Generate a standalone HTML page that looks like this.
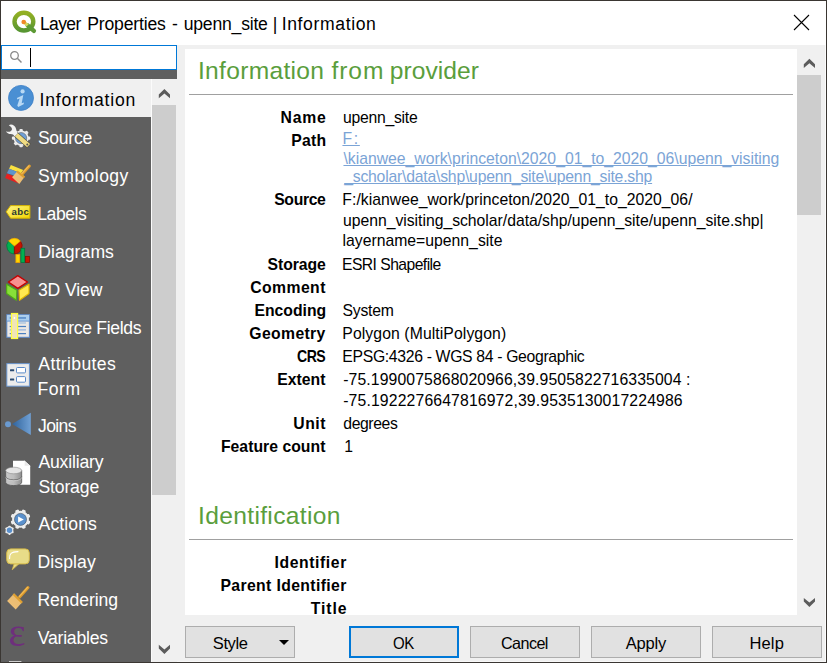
<!DOCTYPE html>
<html><head><meta charset="utf-8">
<style>
html,body{margin:0;padding:0;}
body{width:827px;height:663px;position:relative;overflow:hidden;background:#f0f0f0;font-family:"Liberation Sans",sans-serif;color:#000;}
.abs{position:absolute;}
.t{position:absolute;white-space:pre;}
#frame{position:absolute;left:0;top:0;width:827px;height:663px;box-sizing:border-box;border:1px solid #3a3632;z-index:50;}
#titlebar{left:1px;top:1px;width:825px;height:44px;background:#fff;}
#search{left:1px;top:45px;width:176px;height:25px;box-sizing:border-box;border:1px solid #0078d7;background:#fff;}
#sidebar{left:1px;top:70px;width:176px;height:592px;background:#5f5f5f;}
#sbscroll{left:151px;top:79px;width:26px;height:583px;background:#f0f0f0;}
#sbthumb{left:152px;top:105px;width:24px;height:390px;background:#cdcdcd;}
#selitem{left:1px;top:79px;width:150px;height:38px;background:#f0f0f0;}
#panel{left:185px;top:49px;width:612px;height:566px;background:#fff;}
#vthumb{left:797px;top:75px;width:24px;height:140px;background:#cdcdcd;}
.hr{position:absolute;left:189px;width:604px;height:1px;background:#a0a0a0;}
.btn{position:absolute;top:626px;width:110px;height:32px;box-sizing:border-box;border:1px solid #adadad;background:#e1e1e1;}
</style></head><body>
<div id="titlebar" class="abs"></div>
<!--QGISLOGO-->
<svg class="abs" style="left:793px;top:14px" width="17" height="17" viewBox="0 0 17 17"><path d="M1 1 L16 16 M16 1 L1 16" stroke="#000" stroke-width="1.1" fill="none"/></svg>

<div id="sidebar" class="abs"></div>
<div id="search" class="abs"></div>
<svg class="abs" style="left:9px;top:50px" width="14" height="14" viewBox="0 0 14 14"><circle cx="5.5" cy="5.5" r="3.8" fill="none" stroke="#8a8a8a" stroke-width="1.3"/><path d="M8.3 8.3 L12.5 12.5" stroke="#8a8a8a" stroke-width="1.5"/></svg>
<div class="abs" style="left:30px;top:48px;width:1px;height:19px;background:#000"></div>

<div id="sbscroll" class="abs"></div>
<div id="sbthumb" class="abs"></div>
<div id="selitem" class="abs"></div>
<div class="abs" style="left:151px;top:79px;width:1px;height:583px;background:#fbfbfb"></div>
<div class="abs" style="left:825px;top:45px;width:1px;height:617px;background:#fbfbfb"></div>
<div class="abs" style="left:177px;top:661px;width:649px;height:1px;background:#f8f8f8;z-index:6"></div>
<!-- sidebar scroll arrows -->
<svg class="abs" style="left:0;top:0" width="184" height="663" viewBox="0 0 184 663">
<defs>
<linearGradient id="qg" x1="0" y1="0" x2="0" y2="1"><stop offset="0" stop-color="#93b023"/><stop offset="1" stop-color="#589632"/></linearGradient>
<linearGradient id="jn" x1="0" y1="0" x2="1" y2="0"><stop offset="0" stop-color="#2f639c"/><stop offset="1" stop-color="#70a0d4"/></linearGradient>
<linearGradient id="lb" x1="0" y1="0" x2="1" y2="1"><stop offset="0" stop-color="#fff68a"/><stop offset="1" stop-color="#f2d400"/></linearGradient>
<linearGradient id="db" x1="0" y1="0" x2="1" y2="0"><stop offset="0" stop-color="#c8c8c8"/><stop offset="0.5" stop-color="#bdbdbd"/><stop offset="1" stop-color="#8e8e8e"/></linearGradient>
<pattern id="br" width="1.4" height="1.4" patternUnits="userSpaceOnUse" patternTransform="rotate(45)"><rect width="1.4" height="1.4" fill="#f6d49a"/><rect width="0.7" height="0.7" fill="#e2a850"/><rect x="0.7" y="0.7" width="0.7" height="0.7" fill="#e2a850"/></pattern>
</defs>
<!-- QGIS logo -->
<g>
<ellipse cx="23.9" cy="21.6" rx="9.4" ry="8.9" fill="none" stroke="url(#qg)" stroke-width="4.4"/>
<path d="M27.6 25.4 L33.9 30.8" stroke="#5d9a35" stroke-width="4.4" stroke-linecap="round"/>
<path d="M24.1 22.3 L27.6 25.4" stroke="#d8d860" stroke-width="3.2"/>
<circle cx="23.7" cy="22" r="2.3" fill="#f08a28"/>
</g>
<!-- Information -->
<circle cx="21" cy="97.9" r="12.5" fill="#4a8fd3" stroke="#3f80c6" stroke-width="0.8"/>
<circle cx="22.6" cy="91.4" r="2.1" fill="#b9d9f4"/>
<path d="M16.9 98.1 L23.3 95 L21.7 103.2 L24 102.4 L23.6 104.3 L18.2 107 L17.3 105.6 L19.6 98.4 L17.3 99.6 Z" fill="#b9d9f4"/>
<!-- Source: gear + wrench -->
<g>
<circle cx="21.1" cy="138.1" r="7.6" fill="#ececec"/>
<g fill="#ececec">
<rect x="19.4" y="128.9" width="3.4" height="18.4" rx="1"/>
<rect x="19.4" y="128.9" width="3.4" height="18.4" rx="1" transform="rotate(45 21.1 138.1)"/>
<rect x="19.4" y="128.9" width="3.4" height="18.4" rx="1" transform="rotate(90 21.1 138.1)"/>
<rect x="19.4" y="128.9" width="3.4" height="18.4" rx="1" transform="rotate(135 21.1 138.1)"/>
</g>
<circle cx="21.1" cy="138.1" r="5.6" fill="#6f9fd6" stroke="#4a4a4a" stroke-width="0.5"/>
<path d="M15.8 134.4 L28.8 145.8" stroke="#4a4632" stroke-width="5.4" stroke-linecap="butt"/>
<path d="M16.4 134.9 L28.6 145.6" stroke="#f0dc82" stroke-width="4.5" stroke-linecap="butt"/>
<circle cx="27.3" cy="144.6" r="1" fill="#555"/>
<path d="M8.8 125.2 C11.5 123.6 15.2 125.4 16.1 129 C16.5 130.8 16.7 132 17.7 133.6 L14.6 136.5 C13.6 134.9 12.6 134.1 10.8 134.1 C8.6 134.1 6.7 132.9 6.1 131.2 C8.6 132.3 11.3 131.6 11.9 129.7 C12.4 127.9 10.7 126.3 8.8 125.2 Z" fill="#f2f2f2"/>
</g>
<!-- Symbology -->
<g>
<path d="M10.9 165 L23.2 170.1 L21.1 173.3 L9.1 168.8 Z" fill="#f8e040"/>
<path d="M9.1 168.8 L19 172.4 L16 176 L6.9 173.3 Z" fill="#5f94cc"/>
<path d="M6.9 173.5 L13 176.1 L18.7 183.4 L5.1 178 Z" fill="#e82020"/>
<path d="M17.5 171 L24.7 176.7 L19.3 184 L12.1 177.3 Z" fill="url(#br)"/>
<path d="M17.5 170.6 L25 176.6 L23.8 178.3 L16.3 172.2 Z" fill="#e0a030"/>
<path d="M22 174.2 L29.4 166.1" stroke="#dc9a2c" stroke-width="3" stroke-linecap="round"/><path d="M21.8 173.6 L29 165.8" stroke="#f2bc58" stroke-width="1.1" stroke-linecap="round"/>
</g>
<!-- Labels -->
<g>
<path d="M6.2 211.8 L10.6 205.6 L29.9 205.6 L29.9 218.2 L10.6 218.2 Z" fill="url(#lb)" stroke="#d6b200" stroke-width="1"/>
<text x="11.4" y="214.8" font-family="Liberation Sans, sans-serif" font-weight="bold" font-size="9.6" fill="#2c3a34" letter-spacing="0.4">abc</text>
</g>
<!-- Diagrams -->
<g>
<path d="M14.4 246 L8.6 240.9 A7.9 7.9 0 0 0 14.4 253.9 Z" fill="#00b050" stroke="#007840" stroke-width="0.8"/>
<path d="M14.4 246 L20.4 241.1 A7.9 7.9 0 0 1 14.4 253.9 Z" fill="#c81400" stroke="#8a1000" stroke-width="0.8"/>
<path d="M14.4 246 L8.6 240.9 A7.9 7.9 0 0 1 20.4 241.1 Z" fill="#ffd700" stroke="#f0a800" stroke-width="0.8"/>
<rect x="15.9" y="254.6" width="4" height="8" fill="#ffd700" stroke="#f0a000" stroke-width="0.8"/>
<rect x="20.9" y="248.3" width="3.8" height="14.2" fill="#00b050" stroke="#007840" stroke-width="0.8"/>
<rect x="25.4" y="256.4" width="4" height="6.1" fill="#c81400" stroke="#8a1000" stroke-width="0.8"/>
</g>
<!-- 3D View -->
<g stroke-linejoin="round">
<path d="M17.8 275.6 L27.5 282 L17.8 288.4 L8.4 282 Z" fill="#f89090" stroke="#c40000" stroke-width="1.3"/>
<path d="M6.6 284.2 L16.9 290.2 L16.4 300.2 L6.6 293.5 Z" fill="#88e038" stroke="#52aa18" stroke-width="1.2"/>
<path d="M19 290.2 L29 284.2 L29 293.5 L19.5 300.2 Z" fill="#ffe850" stroke="#e2b800" stroke-width="1.2"/>
</g>
<!-- Source Fields -->
<g>
<rect x="6.8" y="314.7" width="22.6" height="22.6" fill="#ece8e4" stroke="#5a88c8" stroke-width="1"/>
<rect x="7.3" y="315.2" width="21.6" height="5.8" fill="#a8cdee"/>
<rect x="6.8" y="320.6" width="22.6" height="1" fill="#6a98d4"/>
<rect x="9.7" y="317.3" width="16.3" height="1.3" fill="#4a7fc0"/>
<rect x="9.7" y="322.4" width="16.3" height="1.2" fill="#a0bee0"/>
<rect x="9.7" y="325.9" width="16.3" height="1.2" fill="#4a7fc0"/>
<rect x="9.7" y="329.3" width="16.3" height="1.2" fill="#90b0dc"/>
<rect x="9.7" y="333" width="16.3" height="1.2" fill="#4a7fc0"/>
<rect x="11.5" y="313.5" width="6.1" height="25" fill="#f0e4b8" stroke="#ffff3c" stroke-width="1.2"/>
<circle cx="14.4" cy="318" r="0.9" fill="#fff"/>
</g>
<!-- Attributes Form -->
<g>
<rect x="6.8" y="363.6" width="22.6" height="22.6" fill="#ececec" stroke="#6a94cc" stroke-width="1"/>
<rect x="10" y="369.2" width="4.2" height="2.1" rx="0.5" fill="#2a4a70"/>
<rect x="10" y="378.5" width="4.2" height="2.1" rx="0.5" fill="#2a4a70"/>
<rect x="16.5" y="367.5" width="9" height="5.4" rx="1" fill="#fff" stroke="#5a8ac8" stroke-width="1"/>
<rect x="16.5" y="376.6" width="9" height="5.6" rx="1" fill="#fff" stroke="#5a8ac8" stroke-width="1"/>
</g>
<!-- Joins -->
<circle cx="8" cy="424.2" r="3" fill="#6a9ad0"/>
<path d="M12.1 424 L30.8 412.8 L30.8 434.9 Z" fill="url(#jn)"/>
<!-- Auxiliary storage -->
<g>
<path d="M13 460.8 L24.4 460.8 L30.2 466 L30.2 484.7 L13 484.7 Z" fill="#fff"/>
<path d="M24.4 460.8 L24.4 466 L30.2 466 Z" fill="#e8e8e8" stroke="#fff" stroke-width="0.6"/>
<path d="M5.7 470.5 L5.7 482.3 A8 3.3 0 0 0 21.7 482.3 L21.7 470.5 Z" fill="url(#db)" stroke="#4e4e4e" stroke-width="0.7"/>
<path d="M5.7 476.6 A8 3.3 0 0 0 21.7 476.6" fill="none" stroke="#5a5a5a" stroke-width="0.8"/>
<path d="M5.7 477.4 A8 3.3 0 0 0 21.7 477.4" fill="none" stroke="#dcdcdc" stroke-width="0.6"/>
<ellipse cx="13.7" cy="470.5" rx="8" ry="3.3" fill="#e4e4e4" stroke="#8a8a8a" stroke-width="0.6"/>
</g>
<!-- Actions -->
<g>
<g fill="#ececec" transform="rotate(22.5 20.5 519.2)">
<circle cx="20.5" cy="519.2" r="8.5"/>
<rect x="18.6" y="509.2" width="3.8" height="20" rx="1.2"/>
<rect x="18.6" y="509.2" width="3.8" height="20" rx="1.2" transform="rotate(45 20.5 519.2)"/>
<rect x="18.6" y="509.2" width="3.8" height="20" rx="1.2" transform="rotate(90 20.5 519.2)"/>
<rect x="18.6" y="509.2" width="3.8" height="20" rx="1.2" transform="rotate(135 20.5 519.2)"/>
</g>
<circle cx="20.5" cy="519.4" r="6" fill="#5a90cc" stroke="#3a4a5a" stroke-width="0.6"/>
<path d="M18.1 516.6 L23.8 519.4 L18.1 522.4 Z" fill="#fff"/>
<g fill="#ececec">
<circle cx="9.5" cy="530.3" r="3.8"/>
<rect x="8.5" y="525.7" width="2" height="9.2" rx="0.6"/>
<rect x="8.5" y="525.7" width="2" height="9.2" rx="0.6" transform="rotate(60 9.5 530.3)"/>
<rect x="8.5" y="525.7" width="2" height="9.2" rx="0.6" transform="rotate(120 9.5 530.3)"/>
</g>
<circle cx="9.5" cy="530.3" r="2.7" fill="#5a90cc"/>
</g>
<!-- Display -->
<g>
<path d="M14.2 563.6 L12.2 569.8 L19.3 563.6 Z" fill="#e8dc88" stroke="#d4b848" stroke-width="0.8"/>
<rect x="6.7" y="548.9" width="22.6" height="15" rx="4" fill="#e8dc88" stroke="#d4b848" stroke-width="1"/>
<path d="M9.6 558.5 C9.4 553.5 11 552 18 551.6" fill="none" stroke="#fff" stroke-width="1.1" stroke-linecap="round"/>
</g>
<!-- Rendering -->
<g>
<path d="M14.2 593.6 L22.4 602 L15.7 609.6 L7.1 601 Z" fill="url(#br)"/>
<path d="M14 593.2 L22.9 602 L21.3 603.6 L12.6 594.8 Z" fill="#e0a030"/>
<path d="M19.6 597 L28 587.6" stroke="#dc9a2c" stroke-width="3" stroke-linecap="round"/><path d="M19.4 596.4 L27.6 587.3" stroke="#f2bc58" stroke-width="1.1" stroke-linecap="round"/>
</g>
<!-- Variables -->
<text x="8.4" y="645.5" font-family="Liberation Serif, serif" font-size="40.5" fill="#6e2f7c">ε</text>
<rect x="9" y="661" width="12.4" height="1" fill="#cfcfcf"/>
</svg>


<div id="panel" class="abs"></div>
<div id="vthumb" class="abs"></div>

<svg class="abs" style="left:0;top:0;z-index:5" width="827" height="663" viewBox="0 0 827 663"><polygon points="164.4,89.0 170.0,94.6 170.0,98.2 164.4,93.5 158.8,98.2 158.8,94.6" fill="#5c5c5c"/><polygon points="164.4,654.0 170.0,648.4 170.0,644.8 164.4,649.5 158.8,644.8 158.8,648.4" fill="#5c5c5c"/><polygon points="809.4,58.7 815.0,64.3 815.0,67.9 809.4,63.2 803.8,67.9 803.8,64.3" fill="#5c5c5c"/><polygon points="809.4,607.1 815.0,601.5 815.0,597.9 809.4,602.6 803.8,597.9 803.8,601.5" fill="#5c5c5c"/></svg>
<div class="hr" style="top:94px"></div>
<div class="hr" style="top:539px"></div>

<div class="btn" style="left:185px"></div>
<svg class="abs" style="left:278px;top:639px" width="12" height="8" viewBox="0 0 12 8"><path d="M1 1 L11 1 L6 6 Z" fill="#000"/></svg>
<div class="btn" style="left:349px;border:2px solid #0078d7"></div>
<div class="btn" style="left:470px"></div>
<div class="btn" style="left:591px"></div>
<div class="btn" style="left:712px"></div>
<div class="t" style="left:40.33px;top:13.67px;font-size:17.6px;line-height:20.22px;letter-spacing:-0.616px;transform:scaleX(0.9940);transform-origin:0 0;">Layer</div>
<div class="t" style="left:87.18px;top:13.67px;font-size:17.6px;line-height:20.22px;letter-spacing:-0.162px;">Properties</div>
<div class="t" style="left:172.07px;top:13.67px;font-size:17.6px;line-height:20.22px;">-</div>
<div class="t" style="left:183.74px;top:13.67px;font-size:17.6px;line-height:20.22px;letter-spacing:-0.216px;">upenn_site</div>
<div class="t" style="left:272.63px;top:13.67px;font-size:17.6px;line-height:20.22px;">|</div>
<div class="t" style="left:281.65px;top:13.67px;font-size:17.6px;line-height:20.22px;letter-spacing:0.623px;">Information</div>
<div class="t" style="left:39.61px;top:90.07px;font-size:17.6px;line-height:20.22px;letter-spacing:0.766px;">Information</div>
<div class="t" style="left:37.94px;top:128.07px;font-size:17.6px;line-height:20.22px;letter-spacing:-0.302px;color:#fff;">Source</div>
<div class="t" style="left:37.94px;top:166.07px;font-size:17.6px;line-height:20.22px;letter-spacing:0.422px;color:#fff;">Symbology</div>
<div class="t" style="left:37.29px;top:204.07px;font-size:17.6px;line-height:20.22px;letter-spacing:-0.455px;color:#fff;">Labels</div>
<div class="t" style="left:38.18px;top:242.07px;font-size:17.6px;line-height:20.22px;letter-spacing:0.065px;color:#fff;">Diagrams</div>
<div class="t" style="left:37.89px;top:280.07px;font-size:17.6px;line-height:20.22px;letter-spacing:-0.097px;color:#fff;">3D View</div>
<div class="t" style="left:37.94px;top:318.07px;font-size:17.6px;line-height:20.22px;letter-spacing:-0.329px;color:#fff;">Source Fields</div>
<div class="t" style="left:38.34px;top:354.07px;font-size:17.6px;line-height:20.22px;letter-spacing:0.338px;color:#fff;">Attributes</div>
<div class="t" style="left:37.50px;top:379.07px;font-size:17.6px;line-height:20.22px;letter-spacing:0.541px;color:#fff;">Form</div>
<div class="t" style="left:38.21px;top:416.07px;font-size:17.6px;line-height:20.22px;letter-spacing:-0.616px;transform:scaleX(0.9986);transform-origin:0 0;color:#fff;">Joins</div>
<div class="t" style="left:38.44px;top:452.07px;font-size:17.6px;line-height:20.22px;letter-spacing:-0.172px;color:#fff;">Auxiliary</div>
<div class="t" style="left:38.44px;top:477.07px;font-size:17.6px;line-height:20.22px;letter-spacing:-0.147px;color:#fff;">Storage</div>
<div class="t" style="left:38.62px;top:514.07px;font-size:17.6px;line-height:20.22px;letter-spacing:0.092px;color:#fff;">Actions</div>
<div class="t" style="left:37.50px;top:552.07px;font-size:17.6px;line-height:20.22px;letter-spacing:0.087px;color:#fff;">Display</div>
<div class="t" style="left:37.50px;top:590.07px;font-size:17.6px;line-height:20.22px;letter-spacing:-0.083px;color:#fff;">Rendering</div>
<div class="t" style="left:37.68px;top:628.07px;font-size:17.6px;line-height:20.22px;letter-spacing:-0.204px;color:#fff;">Variables</div>
<div class="t" style="left:197.91px;top:56.74px;font-size:24.6px;line-height:28.27px;letter-spacing:0.305px;color:#5a9e3c;">Information</div>
<div class="t" style="left:331.61px;top:56.74px;font-size:24.6px;line-height:28.27px;letter-spacing:0.871px;color:#5a9e3c;">from</div>
<div class="t" style="left:389.86px;top:56.74px;font-size:24.6px;line-height:28.27px;letter-spacing:0.036px;color:#5a9e3c;">provider</div>
<div class="t" style="left:197.98px;top:501.74px;font-size:24.6px;line-height:28.27px;letter-spacing:0.344px;color:#5a9e3c;">Identification</div>
<div class="t" style="left:280.45px;top:108.75px;font-size:15.75px;line-height:18.10px;letter-spacing:0.830px;font-weight:bold;">Name</div>
<div class="t" style="left:291.25px;top:131.75px;font-size:15.75px;line-height:18.10px;letter-spacing:0.261px;font-weight:bold;">Path</div>
<div class="t" style="left:274.23px;top:190.75px;font-size:15.75px;line-height:18.10px;letter-spacing:-0.359px;font-weight:bold;">Source</div>
<div class="t" style="left:267.53px;top:255.75px;font-size:15.75px;line-height:18.10px;letter-spacing:-0.055px;font-weight:bold;">Storage</div>
<div class="t" style="left:250.30px;top:278.75px;font-size:15.75px;line-height:18.10px;letter-spacing:0.413px;font-weight:bold;">Comment</div>
<div class="t" style="left:254.46px;top:301.75px;font-size:15.75px;line-height:18.10px;letter-spacing:-0.001px;font-weight:bold;">Encoding</div>
<div class="t" style="left:249.30px;top:324.75px;font-size:15.75px;line-height:18.10px;letter-spacing:0.362px;font-weight:bold;">Geometry</div>
<div class="t" style="left:297.07px;top:347.75px;font-size:15.75px;line-height:18.10px;letter-spacing:-0.551px;transform:scaleX(0.8943);transform-origin:0 0;font-weight:bold;">CRS</div>
<div class="t" style="left:277.25px;top:370.75px;font-size:15.75px;line-height:18.10px;letter-spacing:0.005px;font-weight:bold;">Extent</div>
<div class="t" style="left:293.34px;top:414.75px;font-size:15.75px;line-height:18.10px;letter-spacing:0.486px;font-weight:bold;">Unit</div>
<div class="t" style="left:220.95px;top:437.75px;font-size:15.75px;line-height:18.10px;letter-spacing:0.027px;font-weight:bold;">Feature count</div>
<div class="t" style="left:274.46px;top:553.75px;font-size:15.75px;line-height:18.10px;letter-spacing:0.593px;font-weight:bold;">Identifier</div>
<div class="t" style="left:220.46px;top:576.75px;font-size:15.75px;line-height:18.10px;letter-spacing:0.371px;font-weight:bold;">Parent Identifier</div>
<div class="t" style="left:310.71px;top:599.75px;font-size:15.75px;line-height:18.10px;letter-spacing:0.930px;font-weight:bold;">Title</div>
<div class="t" style="left:342.96px;top:108.75px;font-size:15.75px;line-height:18.10px;letter-spacing:-0.256px;">upenn_site</div>
<div class="t" style="left:342.35px;top:190.75px;font-size:15.75px;line-height:18.10px;letter-spacing:0.018px;">F:/kianwee_work/princeton/2020_01_to_2020_06/</div>
<div class="t" style="left:342.96px;top:211.75px;font-size:15.75px;line-height:18.10px;letter-spacing:-0.018px;">upenn_visiting_scholar/data/shp/upenn_site/upenn_site.shp|</div>
<div class="t" style="left:342.51px;top:232.25px;font-size:15.75px;line-height:18.10px;letter-spacing:0.006px;">layername=upenn_site</div>
<div class="t" style="left:342.29px;top:255.75px;font-size:15.75px;line-height:18.10px;letter-spacing:-0.551px;transform:scaleX(0.9961);transform-origin:0 0;">ESRI Shapefile</div>
<div class="t" style="left:342.56px;top:301.75px;font-size:15.75px;line-height:18.10px;letter-spacing:-0.254px;">System</div>
<div class="t" style="left:342.35px;top:324.75px;font-size:15.75px;line-height:18.10px;letter-spacing:0.088px;">Polygon (MultiPolygon)</div>
<div class="t" style="left:342.35px;top:347.75px;font-size:15.75px;line-height:18.10px;letter-spacing:-0.326px;">EPSG:4326 - WGS 84 - Geographic</div>
<div class="t" style="left:343.24px;top:370.75px;font-size:15.75px;line-height:18.10px;letter-spacing:0.115px;">-75.1990075868020966,39.9505822716335004 :</div>
<div class="t" style="left:343.24px;top:391.75px;font-size:15.75px;line-height:18.10px;letter-spacing:0.145px;">-75.1922276647816972,39.9535130017224986</div>
<div class="t" style="left:343.27px;top:414.75px;font-size:15.75px;line-height:18.10px;letter-spacing:-0.392px;">degrees</div>
<div class="t" style="left:344.17px;top:437.75px;font-size:15.75px;line-height:18.10px;">1</div>
<div class="t" style="left:342.45px;top:129.85px;font-size:15.75px;line-height:18.10px;letter-spacing:1.692px;color:#7ba4d6;text-decoration:underline;">F:</div>
<div class="t" style="left:343.46px;top:149.55px;font-size:15.75px;line-height:18.10px;letter-spacing:-0.003px;color:#7ba4d6;text-decoration:underline;">\kianwee_work\princeton\2020_01_to_2020_06\upenn_visiting</div>
<div class="t" style="left:344.19px;top:167.65px;font-size:15.75px;line-height:18.10px;letter-spacing:-0.211px;color:#7ba4d6;text-decoration:underline;">_scholar\data\shp\upenn_site\upenn_site.shp</div>
<div class="t" style="left:212.82px;top:633.67px;font-size:16.5px;line-height:18.96px;letter-spacing:-0.394px;">Style</div>
<div class="t" style="left:393.30px;top:633.57px;font-size:16.5px;line-height:18.96px;letter-spacing:-0.578px;transform:scaleX(0.9103);transform-origin:0 0;">OK</div>
<div class="t" style="left:501.48px;top:633.57px;font-size:16.5px;line-height:18.96px;letter-spacing:-0.578px;transform:scaleX(0.9787);transform-origin:0 0;">Cancel</div>
<div class="t" style="left:625.72px;top:633.57px;font-size:16.5px;line-height:18.96px;letter-spacing:-0.183px;">Apply</div>
<div class="t" style="left:749.58px;top:633.57px;font-size:16.5px;line-height:18.96px;letter-spacing:0.097px;">Help</div>
<div id="frame"></div>
</body></html>
